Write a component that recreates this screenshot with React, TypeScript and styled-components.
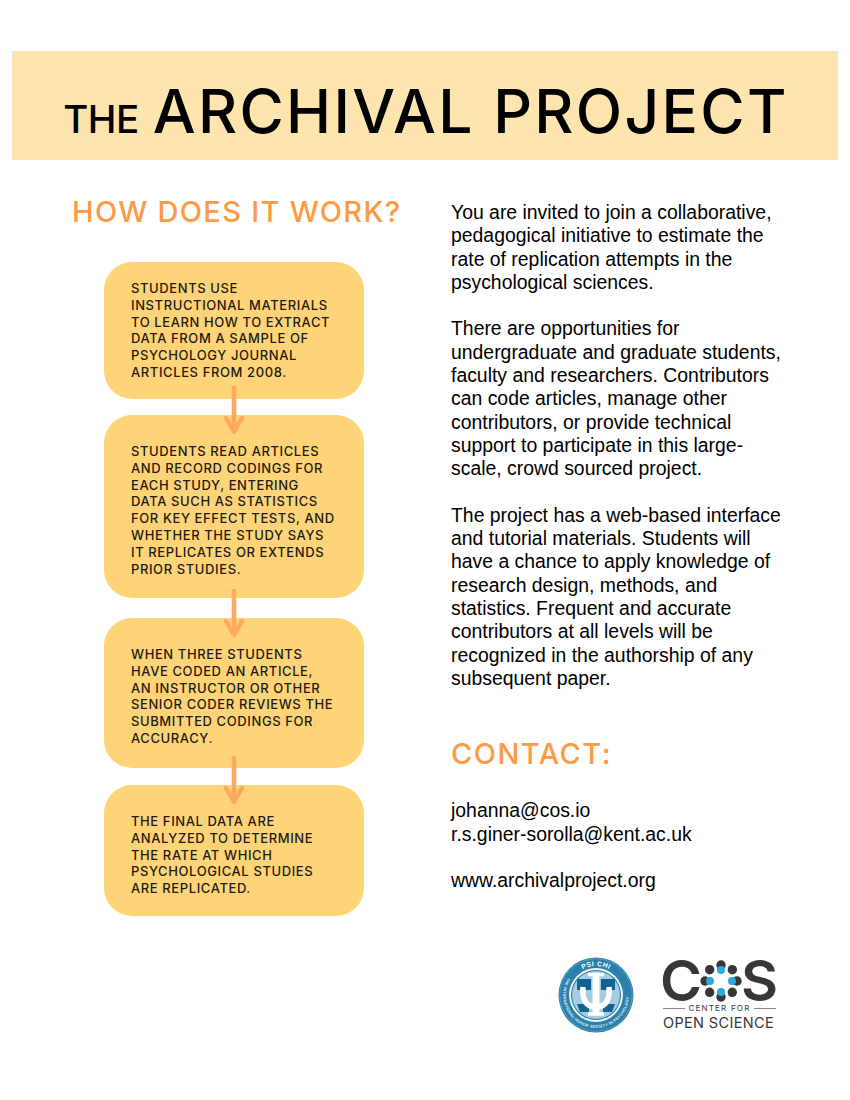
import styled, { createGlobalStyle } from "styled-components"

const GlobalStyle = createGlobalStyle`
html, body {
  margin: 0;
  padding: 0;
  background: #ffffff;
}
`

const steps = [
  { height: 137, top: 18, gap: 16, drop: 37, text: ["Students use", "instructional materials", "to learn how to extract", "data from a sample of", "psychology journal", "articles from 2008."] },
  { height: 183, top: 28, gap: 20, drop: 41, text: ["Students read articles", "and record codings for", "each study, entering", "data such as statistics", "for key effect tests, and", "whether the study says", "it replicates or extends", "prior studies."] },
  { height: 150, top: 28, gap: 17, drop: 38, text: ["When three students", "have coded an article,", "an instructor or other", "senior coder reviews the", "submitted codings for", "accuracy."] },
  { height: 131, top: 28, gap: 0, drop: 0, text: ["The final data are", "analyzed to determine", "the rate at which", "psychological studies", "are replicated."] },
]

const darkDots = [0, 45, 90, 135, 180, 225, 270, 315]
const blueDots = [0, 90, 180, 270]

const Arrow = ({ drop }: { drop: number }) => (
  <ArrowSvg $drop={drop} viewBox="0 0 22 50" width="22" height="50">
    <path d="M11 0V46" stroke="#fda95e" strokeWidth="4.500" fill="none" />
    <path d="M3 32L11 46L19 32" stroke="#fda95e" strokeWidth="4.500" strokeLinecap="round" strokeLinejoin="round" fill="none" />
  </ArrowSvg>
)

const PsiChiLogo = () => (
  <svg viewBox="0 0 76 76" width="76" height="76">
    <defs>
      <path id="ringTop" d="M9 38a29 29 0 0 1 58 0" />
      <path id="ringSide" d="M10 20.500a33 33 0 1 0 56 0" />
    </defs>
    <circle cx="38" cy="38" r="37.500" fill="#2a7fab" />
    <circle cx="38" cy="38" r="36.200" fill="none" stroke="#7fb6d2" strokeWidth="0.500" />
    <circle cx="38" cy="38" r="27" fill="#eef6fa" />
    <circle cx="38" cy="38" r="25" fill="#1f76a3" />
    <circle cx="38" cy="38" r="24" fill="#a4cde3" />
    <text fontFamily="Liberation Sans, sans-serif" fontSize="6.800" fontWeight="700" fill="#ffffff" textAnchor="middle" letterSpacing="0.500">
      <textPath href="#ringTop" startOffset="50%">PSI CHI</textPath>
    </text>
    <text fontFamily="Liberation Sans, sans-serif" fontSize="4.100" fontWeight="700" fill="#dcecf4" letterSpacing="0.150">
      <textPath href="#ringSide">THE INTERNATIONAL HONOR SOCIETY IN PSYCHOLOGY</textPath>
    </text>
    <path d="M19 22h14v11H19zM43 22h14v11H43zM19 47h12v8H22zM45 47h12l-3 8h-9z" fill="#14628f" />
    <path d="M25 30c-1 11 2 20 13 20s14-9 13-20" stroke="#ffffff" strokeWidth="5.500" fill="none" />
    <path d="M38 17V57" stroke="#ffffff" strokeWidth="7" fill="none" />
    <path d="M30 17.500H46M30 57H46" stroke="#ffffff" strokeWidth="3.500" fill="none" />
  </svg>
)

const CosLogo = () => (
  <LogoBox>
    <CosRow>
      <CosLetter>C</CosLetter>
      <DotsSvg viewBox="0 0 42 42" width="42" height="42">
        {darkDots.map((angle) => (
          <circle key={angle} cx="21" cy="5" r="4.700" fill="#373737" transform={`rotate(${angle} 21 21)`} />
        ))}
        {blueDots.map((angle) => (
          <circle key={angle} cx="21" cy="10" r="4" fill="#2aaae2" transform={`rotate(${angle} 21 21)`} />
        ))}
      </DotsSvg>
      <CosLetter>S</CosLetter>
    </CosRow>
    <CenterRow>
      <Rule />
      <CenterText>CENTER FOR</CenterText>
      <Rule />
    </CenterRow>
    <OpenScience>OPEN SCIENCE</OpenScience>
  </LogoBox>
)

const App = () => {
  return (
    <Page>
      <GlobalStyle />
      <Banner>
        <Small>THE</Small>
        <Big>ARCHIVAL PROJECT</Big>
      </Banner>
      <Columns>
        <LeftCol>
          <Heading>HOW DOES IT WORK?</Heading>
          <Steps>
            {steps.map((step, i) => (
              <Step key={i} $height={step.height} $top={step.top} $gap={step.gap}>
                {step.text.map((line) => (
                  <StepLine key={line}>{line}</StepLine>
                ))}
                {i < steps.length - 1 && <Arrow drop={step.drop} />}
              </Step>
            ))}
          </Steps>
        </LeftCol>
        <RightCol>
          <Para>
            You are invited to join a collaborative,<br />
            pedagogical initiative to estimate the<br />
            rate of replication attempts in the<br />
            psychological sciences.
          </Para>
          <Para>
            There are opportunities for<br />
            undergraduate and graduate students,<br />
            faculty and researchers. Contributors<br />
            can code articles, manage other<br />
            contributors, or provide technical<br />
            support to participate in this large-<br />
            scale, crowd sourced project.
          </Para>
          <Para>
            The project has a web-based interface<br />
            and tutorial materials. Students will<br />
            have a chance to apply knowledge of<br />
            research design, methods, and<br />
            statistics. Frequent and accurate<br />
            contributors at all levels will be<br />
            recognized in the authorship of any<br />
            subsequent paper.
          </Para>
          <ContactHeading>CONTACT:</ContactHeading>
          <Para>
            johanna@cos.io<br />
            r.s.giner-sorolla@kent.ac.uk
          </Para>
          <Para>www.archivalproject.org</Para>
        </RightCol>
      </Columns>
      <Logos>
        <PsiChiLogo />
        <CosLogo />
      </Logos>
    </Page>
  )
}

export default App

const Page = styled.div`
width: 850px;
height: 1100px;
overflow: hidden;
padding-top: 51px;
box-sizing: border-box;
background: #ffffff;
`
const Banner = styled.div`
margin: 0 12px;
height: 109px;
background-color: #fee5b0;
display: flex;
justify-content: center;
align-items: baseline;
gap: 14px;
color: #000000;
font-family: "Inter", sans-serif;
line-height: 121px;
white-space: nowrap;
`
const Small = styled.span`
font-size: 38.500px;
font-weight: 500;
letter-spacing: -0.500px;
`
const Big = styled.span`
font-size: 60.500px;
font-weight: 500;
letter-spacing: 2.300px;
margin-right: -2px;
`
const Columns = styled.div`
display: flex;
padding-top: 34px;
`
const LeftCol = styled.div`
width: 379px;
margin-left: 72px;
`
const Heading = styled.h2`
margin: 0;
font-family: "Inter", sans-serif;
font-weight: 500;
font-size: 29px;
line-height: 36px;
letter-spacing: 1.300px;
color: #fd9a46;
white-space: nowrap;
`
const Steps = styled.div`
margin-top: 32px;
margin-left: 32px;
width: 260px;
`
const Step = styled.div<{ $height: number; $top: number; $gap: number }>`
position: relative;
height: ${(p) => p.$height}px;
margin-bottom: ${(p) => p.$gap}px;
padding: ${(p) => p.$top}px 0 0 27px;
box-sizing: border-box;
border-radius: 28px;
background-color: #ffd478;
`
const StepLine = styled.div`
font-family: "Inter", sans-serif;
font-size: 13px;
font-weight: 500;
line-height: 16.800px;
letter-spacing: 0.600px;
text-transform: uppercase;
color: #1d1a12;
white-space: nowrap;
`
const ArrowSvg = styled.svg<{ $drop: number }>`
position: absolute;
left: 119px;
bottom: -${(p) => p.$drop}px;
z-index: 1;
`
const RightCol = styled.div`
width: 360px;
padding-top: 7px;
`
const Para = styled.p`
margin: 0 0 23.300px;
font-family: "Liberation Sans", Arial, sans-serif;
font-size: 19.400px;
line-height: 23.300px;
color: #000000;
white-space: nowrap;
`
const ContactHeading = styled.h2`
margin: 46px 0 27px;
font-family: "Inter", sans-serif;
font-weight: 500;
font-size: 29px;
line-height: 36px;
letter-spacing: 1.450px;
color: #fd9a46;
`
const Logos = styled.div`
margin-top: 41px;
padding-left: 558px;
display: flex;
align-items: flex-start;
gap: 29px;
`
const LogoBox = styled.div`
width: 113px;
display: flex;
flex-direction: column;
align-items: stretch;
margin-top: 3px;
`
const CosRow = styled.div`
display: flex;
justify-content: space-between;
align-items: center;
height: 42px;
margin-left: -3px;
margin-right: -2px;
`
const DotsSvg = styled.svg`
flex-shrink: 0;
margin: 0 -6px 0 -6px;
`
const CosLetter = styled.span`
font-family: "Inter", sans-serif;
font-weight: 600;
font-size: 57px;
line-height: 42px;
color: #373737;
`
const CenterRow = styled.div`
display: flex;
align-items: center;
justify-content: space-between;
height: 10px;
margin-top: 1px;
`
const Rule = styled.div`
width: 22px;
height: 1px;
background-color: #888888;
`
const CenterText = styled.span`
font-family: "Inter", sans-serif;
font-size: 8px;
line-height: 10px;
letter-spacing: 1.200px;
color: #373737;
`
const OpenScience = styled.div`
margin-top: 3px;
font-family: "Inter", sans-serif;
font-size: 14.500px;
line-height: 13px;
letter-spacing: 0.350px;
color: #373737;
white-space: nowrap;
`
